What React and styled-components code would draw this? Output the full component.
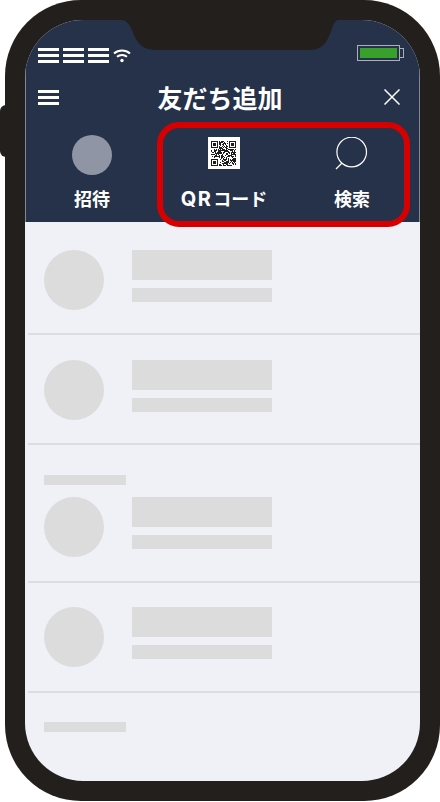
import React from 'react';
import styled, { createGlobalStyle } from 'styled-components';

const GlobalStyle = createGlobalStyle`
  html, body {
    margin: 0;
    padding: 0;
    background: #fff;
  }
`;

// fake QR matrix, finder patterns plus a stable pseudo random fill
const QR_SIZE = 25;
const inFinder = (x, y, ox, oy) => x >= ox && x < ox + 7 && y >= oy && y < oy + 7;
const finderOn = (x, y, ox, oy) => {
  const dx = x - ox;
  const dy = y - oy;
  if (dx === 0 || dx === 6 || dy === 0 || dy === 6) return true;
  return dx >= 2 && dx <= 4 && dy >= 2 && dy <= 4;
};
const qrCells = () => {
  const cells = [];
  for (let y = 0; y < QR_SIZE; y++) {
    for (let x = 0; x < QR_SIZE; x++) {
      let on;
      const finders = [[0, 0], [18, 0], [0, 18]];
      const hit = finders.find(([ox, oy]) => inFinder(x, y, ox, oy));
      if (hit) on = finderOn(x, y, hit[0], hit[1]);
      else if ((x < 8 && y < 8) || (x > 16 && y < 8) || (x < 8 && y > 16)) on = false;
      else on = ((x * 7 + y * 13 + x * y * 3) ^ (x * y + 5)) % 5 < 3;
      if (on) cells.push([x, y]);
    }
  }
  return cells;
};

function Bars() {
  return (
    <BarStack>
      <Bar />
      <Bar />
      <Bar />
    </BarStack>
  );
}

function WifiIcon() {
  return (
    <svg width="18" height="15" viewBox="0 0 18 15" fill="none" stroke="#fff" strokeWidth="2">
      <path d="M1 5.5C5.5 1.5 12.5 1.5 17 5.5" />
      <path d="M4 8.8C6.8 6.3 11.2 6.3 14 8.8" />
      <circle cx="9" cy="12.5" r="1.7" fill="#fff" stroke="none" />
    </svg>
  );
}

function QrIcon() {
  return (
    <QrBox>
      <svg width="25" height="25" viewBox="0 0 25 25" shapeRendering="crispEdges">
        {qrCells().map(([x, y]) => (
          <rect key={`${x}-${y}`} x={x} y={y} width="1" height="1" fill="#1d1d1d" />
        ))}
      </svg>
    </QrBox>
  );
}

function SearchIcon() {
  return (
    <SearchSvg width="34" height="36" viewBox="0 0 34 36" fill="none" stroke="#fff" strokeWidth="1.2">
      <circle cx="16.7" cy="15" r="14.8" />
      <path d="M7 26L1 32" />
    </SearchSvg>
  );
}

function CloseIcon() {
  return (
    <svg width="16" height="16" viewBox="0 0 16 16" fill="none" stroke="#fff" strokeWidth="1.5">
      <path d="M.5.5l15 15M15.5.5l-15 15" />
    </svg>
  );
}

const FriendRow = ({ height, top, children }) => (
  <Row $height={height} $top={top}>
    {children}
    <RowBody>
      <Avatar />
      <RowText>
        <NameBar />
        <SubBar />
      </RowText>
    </RowBody>
  </Row>
);

export default function App() {
  return (
    <>
      <GlobalStyle />
      <Phone>
        <SideButton />
        <Notch viewBox="0 0 218 32" width="218" height="32">
          <path d="M0 0H218C212 0 212 8 208 16C204 26 198 30 188 30H36C22 30 17 24 13 15C10 7 7 0 0 0Z" fill="#231f1c" />
        </Notch>
        <Screen>
          <Header>
            <StatusBar>
              <Signal>
                <Bars />
                <Bars />
                <Bars />
                <WifiIcon />
              </Signal>
              <Battery>
                <BatteryFill />
                <BatteryCap />
              </Battery>
            </StatusBar>
            <TitleBar>
              <Bars />
              <Title>友だち追加</Title>
              <CloseSlot><CloseIcon /></CloseSlot>
            </TitleBar>
            <Actions>
              <Action>
                <IconSlot><InviteDot /></IconSlot>
                <ActionLabel>招待</ActionLabel>
              </Action>
              <Action>
                <IconSlot><QrIcon /></IconSlot>
                <ActionLabel><Latin>QR</Latin>コード</ActionLabel>
              </Action>
              <Action>
                <IconSlot><SearchIcon /></IconSlot>
                <ActionLabel>検索</ActionLabel>
              </Action>
            </Actions>
          </Header>
          <List>
            <FriendRow height={113} top={28} />
            <FriendRow height={110} top={25} />
            <FriendRow height={138} top={30}>
              <SectionBar />
            </FriendRow>
            <FriendRow height={110} top={24} />
            <Footer>
              <SectionBar />
            </Footer>
          </List>
        </Screen>
        <Highlight />
      </Phone>
    </>
  );
}

const Phone = styled.div`
  position: relative;
  box-sizing: border-box;
  width: 435px;
  height: 801px;
  margin-left: 5px;
  padding: 20px;
  background: #231f1c;
  border-radius: 76px;
  font-family: "Noto Sans CJK JP", "Noto Sans", sans-serif;
`;

const SideButton = styled.div`
  position: absolute;
  left: -5px;
  top: 105px;
  width: 10px;
  height: 52px;
  background: #231f1c;
  border-radius: 6px 0 0 6px;
`;

const Notch = styled.svg`
  position: absolute;
  left: 116px;
  top: 20px;
  display: block;
`;

const Screen = styled.div`
  display: flex;
  flex-direction: column;
  height: 761px;
  overflow: hidden;
  border-radius: 58px;
  background: #f0f0f7;
`;

const Header = styled.div`
  flex: none;
  height: 202px;
  background:
    linear-gradient(to right, #7f8896 1px, transparent 1px),
    linear-gradient(to left, #7f8896 1px, transparent 1px),
    #25324a;
`;

const StatusBar = styled.div`
  display: flex;
  justify-content: space-between;
  padding: 25px 20px 0 13px;
  height: 23px;
`;

const Signal = styled.div`
  display: flex;
  gap: 4px;
  padding-top: 3px;
`;

const BarStack = styled.div`
  display: flex;
  flex-direction: column;
  gap: 3px;
  width: 21px;
`;

const Bar = styled.div`
  height: 3px;
  background: #fff;
`;

const Battery = styled.div`
  position: relative;
  box-sizing: border-box;
  width: 43px;
  height: 16px;
  padding: 2px;
  border: 1px solid #a9b0bc;
`;

const BatteryFill = styled.div`
  height: 100%;
  background: #3aa02c;
`;

const BatteryCap = styled.div`
  position: absolute;
  right: -5px;
  top: 2px;
  width: 4px;
  height: 10px;
  border: 1px solid #a9b0bc;
  border-left: none;
  box-sizing: border-box;
`;

const TitleBar = styled.div`
  display: grid;
  grid-template-columns: 21px 1fr 16px;
  align-items: center;
  padding: 16px 20px 0 13px;
`;

const Title = styled.h1`
  margin: 0 0 0 -3px;
  font-size: 25px;
  line-height: 26px;
  font-weight: 700;
  color: #fff;
  text-align: center;
`;

const CloseSlot = styled.div`
  display: flex;
`;

const Actions = styled.div`
  display: grid;
  grid-template-columns: 134px 130px 126px;
  justify-items: center;
  padding-top: 25px;
`;

const Action = styled.div`
  display: flex;
  flex-direction: column;
  align-items: center;
`;

const IconSlot = styled.div`
  display: flex;
  align-items: flex-start;
  justify-content: center;
  height: 40px;
`;

const InviteDot = styled.div`
  width: 40px;
  height: 40px;
  border-radius: 50%;
  background: #8f95a4;
`;

const QrBox = styled.div`
  display: flex;
  align-items: center;
  justify-content: center;
  width: 32px;
  height: 32px;
  margin-top: 2px;
  background: #fff;
`;

const SearchSvg = styled.svg`
  display: block;
  margin-top: 2px;
`;

const ActionLabel = styled.div`
  margin-top: 10px;
  font-size: 18px;
  line-height: 26px;
  font-weight: 700;
  color: #fff;
  white-space: nowrap;
`;

const Latin = styled.span`
  font-family: Inter, "Noto Sans", sans-serif;
  font-size: 20px;
  letter-spacing: 1.5px;
  margin-right: 1px;
`;

const Highlight = styled.div`
  position: absolute;
  left: 152px;
  top: 122px;
  box-sizing: border-box;
  width: 253px;
  height: 105px;
  border: 6px solid #d60000;
  border-radius: 22px;
`;

const List = styled.div`
  flex: 1;
  display: flex;
  flex-direction: column;
`;

const Row = styled.div`
  box-sizing: border-box;
  height: ${(p) => p.$height}px;
  margin-left: 3px;
  padding: ${(p) => p.$top}px 0 0 16px;
  border-bottom: 2px solid #dcdce2;
`;

const RowBody = styled.div`
  display: flex;
  gap: 28px;
`;

const Avatar = styled.div`
  flex: none;
  width: 60px;
  height: 60px;
  border-radius: 50%;
  background: #dcdcdc;
`;

const RowText = styled.div`
  display: flex;
  flex-direction: column;
  gap: 8px;
`;

const NameBar = styled.div`
  width: 140px;
  height: 30px;
  background: #dcdcdc;
`;

const SubBar = styled.div`
  width: 140px;
  height: 14px;
  background: #dcdcdc;
`;

const SectionBar = styled.div`
  width: 82px;
  height: 10px;
  margin-bottom: 12px;
  background: #dcdcdc;
`;

const Footer = styled.div`
  padding: 29px 0 0 19px;
`;
